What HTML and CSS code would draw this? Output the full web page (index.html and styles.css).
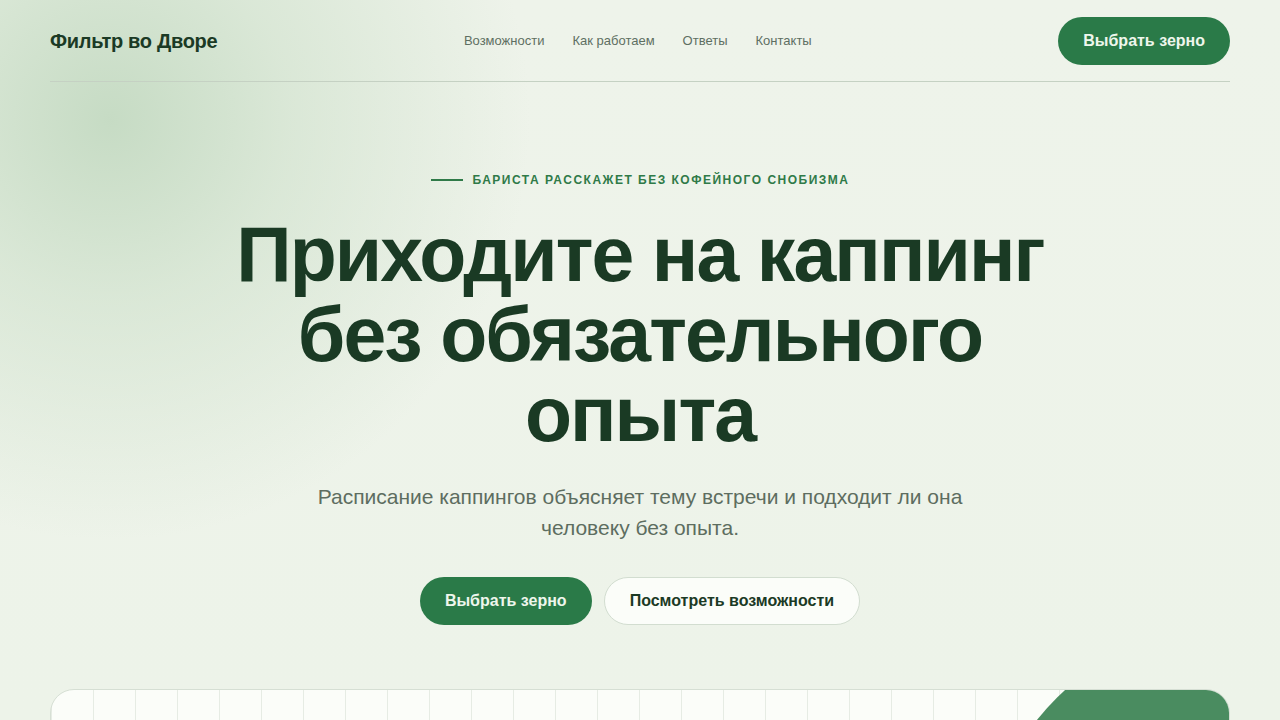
FILE: index.html
```html
<!DOCTYPE html>
<html lang="ru">
<head>
    <meta charset="UTF-8">
    <meta name="viewport" content="width=device-width, initial-scale=1.0">
    <title>Фильтр во Дворе</title>
    <link rel="stylesheet" href="styles.css">
</head>
<body>
    <div class="page">
        <header class="header">
            <a class="logo" href="#">Фильтр во Дворе</a>
            <nav class="nav">
                <a href="#features">Возможности</a>
                <a href="#how">Как работаем</a>
                <a href="#faq">Ответы</a>
                <a href="#contacts">Контакты</a>
            </nav>
            <a class="btn btn-primary" href="#beans">Выбрать зерно</a>
        </header>

        <section class="hero">
            <p class="eyebrow">Бариста расскажет без кофейного снобизма</p>
            <h1>Приходите на каппинг без обязательного опыта</h1>
            <p class="lead">Расписание каппингов объясняет тему встречи и подходит ли она человеку без опыта.</p>
            <div class="actions">
                <a class="btn btn-primary" href="#beans">Выбрать зерно</a>
                <a class="btn btn-ghost" href="#features">Посмотреть возможности</a>
            </div>
        </section>

        <div class="preview">
            <div class="preview-blob"></div>
        </div>
    </div>
</body>
</html>
```

FILE: styles.css
```css
* { box-sizing: border-box; }

body {
    margin: 0;
    height: 720px;
    font-family: "Liberation Sans", Arial, sans-serif;
    color: #1b3a25;
    background:
        radial-gradient(circle at 110px 120px, rgba(196, 218, 194, 0.95) 0, rgba(205, 224, 202, 0.6) 180px, rgba(238, 243, 234, 0) 420px),
        linear-gradient(180deg, #eef3ea 0%, #edf3e9 100%);
    overflow: hidden;
}

a { text-decoration: none; color: inherit; }

.page { max-width: 1180px; margin: 0 auto; }

.header {
    display: flex;
    align-items: center;
    justify-content: space-between;
    padding: 17px 0 16px;
    border-bottom: 1px solid #c5d1c3;
}

.logo { font-size: 20px; font-weight: 700; color: #1b3a25; letter-spacing: -0.3px; }

.nav { display: flex; gap: 28px; font-size: 13px; color: #5e6f62; margin-top: -2px; }

.btn {
    display: inline-flex;
    align-items: center;
    justify-content: center;
    height: 48px;
    padding: 0 25px;
    border-radius: 24px;
    font-size: 16px;
    font-weight: 700;
}

.btn-primary { background: #2a7a48; color: #eef6ec; }
.btn-ghost { background: #fbfdf9; color: #1b3a25; border: 1px solid #d2ddd0; }

.hero { text-align: center; padding-top: 91px; }

.eyebrow {
    display: flex;
    align-items: center;
    justify-content: center;
    gap: 10px;
    margin: 0;
    font-size: 12px;
    font-weight: 700;
    letter-spacing: 0.125em;
    text-transform: uppercase;
    color: #2f7a48;
}

.eyebrow::before { content: ""; width: 32px; height: 2px; background: #2f7a48; }

h1 {
    max-width: 900px;
    margin: 27px auto 0;
    font-size: 77px;
    line-height: 80px;
    letter-spacing: -0.025em;
    font-weight: 700;
    color: #1a3a24;
}

.lead {
    max-width: 660px;
    margin: 27px auto 0;
    font-size: 21px;
    line-height: 31px;
    color: #5d6d60;
}

.actions { display: flex; justify-content: center; gap: 12px; margin-top: 34px; }

.preview {
    position: relative;
    height: 260px;
    margin-top: 64px;
    border: 1px solid #d6dfd4;
    border-radius: 24px;
    overflow: hidden;
    background-color: #fbfdf9;
    background-image: linear-gradient(90deg, #e6ece4 1px, transparent 1px);
    background-size: 42px 100%;
    background-position: 42px 0;
}

/* green shape in the corner of the preview */
.preview-blob {
    position: absolute;
    left: 918px;
    top: -80px;
    width: 600px;
    height: 600px;
    border-radius: 50%;
    background: #4a8c60;
}
```
